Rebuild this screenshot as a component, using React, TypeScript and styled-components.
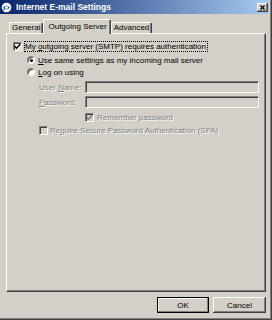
import React from "react";
import styled, { createGlobalStyle, css } from "styled-components";

const Global = createGlobalStyle`
  html, body { margin: 0; padding: 0; background: #d4d0c8; }
  body { font-family: "Liberation Sans", Arial, sans-serif; font-size: 8px; color: #000; }
  * { box-sizing: border-box; }
`;

const Window = styled.div`
  width: 272px;
  height: 320px;
  background: #d4d0c8;
  display: flex;
  flex-direction: column;
  padding: 0 3px 2px 0;
  box-shadow: inset -1px -1px #404040, inset -2px -2px #808080;
`;

const TitleBar = styled.div`
  height: 14px;
  flex: none;
  display: flex;
  align-items: center;
  padding: 0 1px 0 1px;
  background: linear-gradient(to right, #0a246a, #a6caf0);
`;

const TitleText = styled.span`
  margin-left: 4px;
  flex: 1;
  color: #fff;
  font-weight: bold;
  font-size: 8.5px;
  line-height: 12px;
  white-space: nowrap;
`;

const CloseBtn = styled.div`
  width: 11px;
  height: 9px;
  display: flex;
  align-items: center;
  justify-content: center;
  background: #d4d0c8;
  box-shadow: inset -1px -1px #404040, inset 1px 1px #fff, inset -2px -2px #808080;
`;

const Body = styled.div`
  flex: 1;
  display: flex;
  flex-direction: column;
  margin-left: 6px;
  width: 260px;
`;

const TabRow = styled.div`
  margin-top: 5px;
  height: 14px;
  display: flex;
  align-items: flex-end;
  padding-left: 3px;
`;

const Tab = styled.div<{ $active?: boolean }>`
  background: #d4d0c8;
  border-top: 1px solid #fff;
  border-left: 1px solid #fff;
  border-right: 1px solid #404040;
  border-radius: 2px 2px 0 0;
  box-shadow: inset -1px 0 #808080;
  line-height: 10px;
  white-space: nowrap;
  ${(p) =>
    p.$active
      ? css`
          height: 15px;
          padding: 2px 3px 0 4px;
          margin-bottom: -1px;
          position: relative;
          z-index: 1;
        `
      : css`
          height: 11px;
          padding: 0 2px;
        `}
`;

const Panel = styled.div`
  flex: 1;
  border-top: 1px solid #fff;
  border-left: 1px solid #fff;
  border-right: 1px solid #404040;
  border-bottom: 1px solid #404040;
  box-shadow: inset -1px -1px #808080;
  display: flex;
  flex-direction: column;
  padding-top: 7px;
`;

const Row = styled.div<{ $indent: number; $top: number; $h?: number }>`
  display: flex;
  align-items: center;
  height: ${(p) => p.$h ?? 12}px;
  margin-top: ${(p) => p.$top}px;
  padding-left: ${(p) => p.$indent}px;
  white-space: nowrap;
`;

const Box = styled.div<{ $disabled?: boolean }>`
  width: 9px;
  height: 9px;
  flex: none;
  display: flex;
  align-items: center;
  justify-content: center;
  background: ${(p) => (p.$disabled ? "#d4d0c8" : "#fff")};
  border: 1px solid;
  border-color: #808080 #fff #fff #808080;
  box-shadow: inset 1px 1px #404040, inset -1px -1px #d4d0c8;
`;

const Radio = styled.div<{ $on?: boolean }>`
  width: 8px;
  height: 8px;
  flex: none;
  border-radius: 50%;
  background: #fff;
  border: 1px solid;
  border-color: #808080 #fff #fff #808080;
  box-shadow: inset 1px 1px #404040;
  display: flex;
  align-items: center;
  justify-content: center;
  &::after {
    content: "";
    width: 3px;
    height: 3px;
    border-radius: 50%;
    background: ${(p) => (p.$on ? "#000" : "transparent")};
  }
`;

const Label = styled.span<{ $gap: number; $disabled?: boolean; $focus?: boolean }>`
  margin-left: ${(p) => p.$gap}px;
  line-height: 9px;
  ${(p) =>
    p.$disabled &&
    css`
      color: #808080;
      text-shadow: 1px 1px 0 #fff;
    `}
  ${(p) =>
    p.$focus &&
    css`
      border: 1px dotted #000;
      padding: 0 1px 0 0;
    `}
`;

const FieldLabel = styled(Label)`
  width: 46px;
  margin-left: 0;
`;

const Input = styled.div`
  width: 174px;
  height: 12px;
  background: #d4d0c8;
  border: 1px solid;
  border-color: #808080 #fff #fff #808080;
  box-shadow: inset 1px 1px #404040, inset -1px -1px #d4d0c8;
`;

const ButtonRow = styled.div`
  display: flex;
  justify-content: flex-end;
  gap: 4px;
  margin: 5px 0 5px;
  height: 16px;
`;

const Button = styled.div<{ $default?: boolean; $w: number }>`
  width: ${(p) => p.$w}px;
  height: 16px;
  display: flex;
  align-items: center;
  justify-content: center;
  background: #d4d0c8;
  color: #000;
  ${(p) =>
    p.$default
      ? css`
          border: 1px solid #000;
          box-shadow: inset -1px -1px #808080, inset 1px 1px #fff;
        `
      : css`
          box-shadow: inset -1px -1px #404040, inset 1px 1px #fff, inset -2px -2px #808080;
        `}
`;

const U = styled.span`
  text-decoration: underline;
`;

const Check = ({ color = "#000" }: { color?: string }) => (
  <svg width="7" height="7" viewBox="0 0 7 7">
    <polyline points="0.8,3.2 2.6,5.2 6.2,1.2" fill="none" stroke={color} strokeWidth="1.4" />
  </svg>
);

const AppIcon = () => (
  <svg width="11" height="11" viewBox="0 0 11 11">
    <circle cx="5.5" cy="5.5" r="4.8" fill="#fff" />
    <path d="M2 5.5 Q5.5 1.5 9 5.5 Q5.5 9.5 2 5.5Z" fill="#3a6ec8" />
    <circle cx="5.5" cy="5.5" r="1.4" fill="#fff" />
    <path d="M1 8.5 L4 6.5" stroke="#1c3f94" strokeWidth="1" />
  </svg>
);

const CloseX = () => (
  <svg width="5" height="5" viewBox="0 0 5 5">
    <path d="M0.5 0.5 L4.5 4.5 M4.5 0.5 L0.5 4.5" stroke="#000" strokeWidth="1.2" />
  </svg>
);

export default function App() {
  return (
    <>
      <Global />
      <Window>
        <TitleBar>
          <AppIcon />
          <TitleText>Internet E-mail Settings</TitleText>
          <CloseBtn>
            <CloseX />
          </CloseBtn>
        </TitleBar>
        <Body>
          <TabRow>
            <Tab>General</Tab>
            <Tab $active>Outgoing Server</Tab>
            <Tab>Advanced</Tab>
          </TabRow>
          <Panel>
            <Row $indent={6} $top={0} $h={11}>
              <Box>
                <Check />
              </Box>
              <Label $gap={2} $focus>
                My <U>o</U>utgoing server (SMTP) requires authentication
              </Label>
            </Row>
            <Row $indent={20} $top={2}>
              <Radio $on />
              <Label $gap={3}>
                <U>U</U>se same settings as my incoming mail server
              </Label>
            </Row>
            <Row $indent={20} $top={0}>
              <Radio />
              <Label $gap={3}>
                <U>L</U>og on using
              </Label>
            </Row>
            <Row $indent={32} $top={3}>
              <FieldLabel $gap={0} $disabled>
                User <U>N</U>ame:
              </FieldLabel>
              <Input />
            </Row>
            <Row $indent={32} $top={3}>
              <FieldLabel $gap={0} $disabled>
                <U>P</U>assword:
              </FieldLabel>
              <Input />
            </Row>
            <Row $indent={78} $top={4} $h={11}>
              <Box $disabled>
                <Check color="#808080" />
              </Box>
              <Label $gap={3} $disabled>
                Remember password
              </Label>
            </Row>
            <Row $indent={32} $top={2} $h={11}>
              <Box $disabled />
              <Label $gap={2} $disabled>
                Re<U>q</U>uire Secure Password Authentication (SPA)
              </Label>
            </Row>
          </Panel>
          <ButtonRow>
            <Button $default $w={52}>OK</Button>
            <Button $w={53}>Cancel</Button>
          </ButtonRow>
        </Body>
      </Window>
    </>
  );
}
